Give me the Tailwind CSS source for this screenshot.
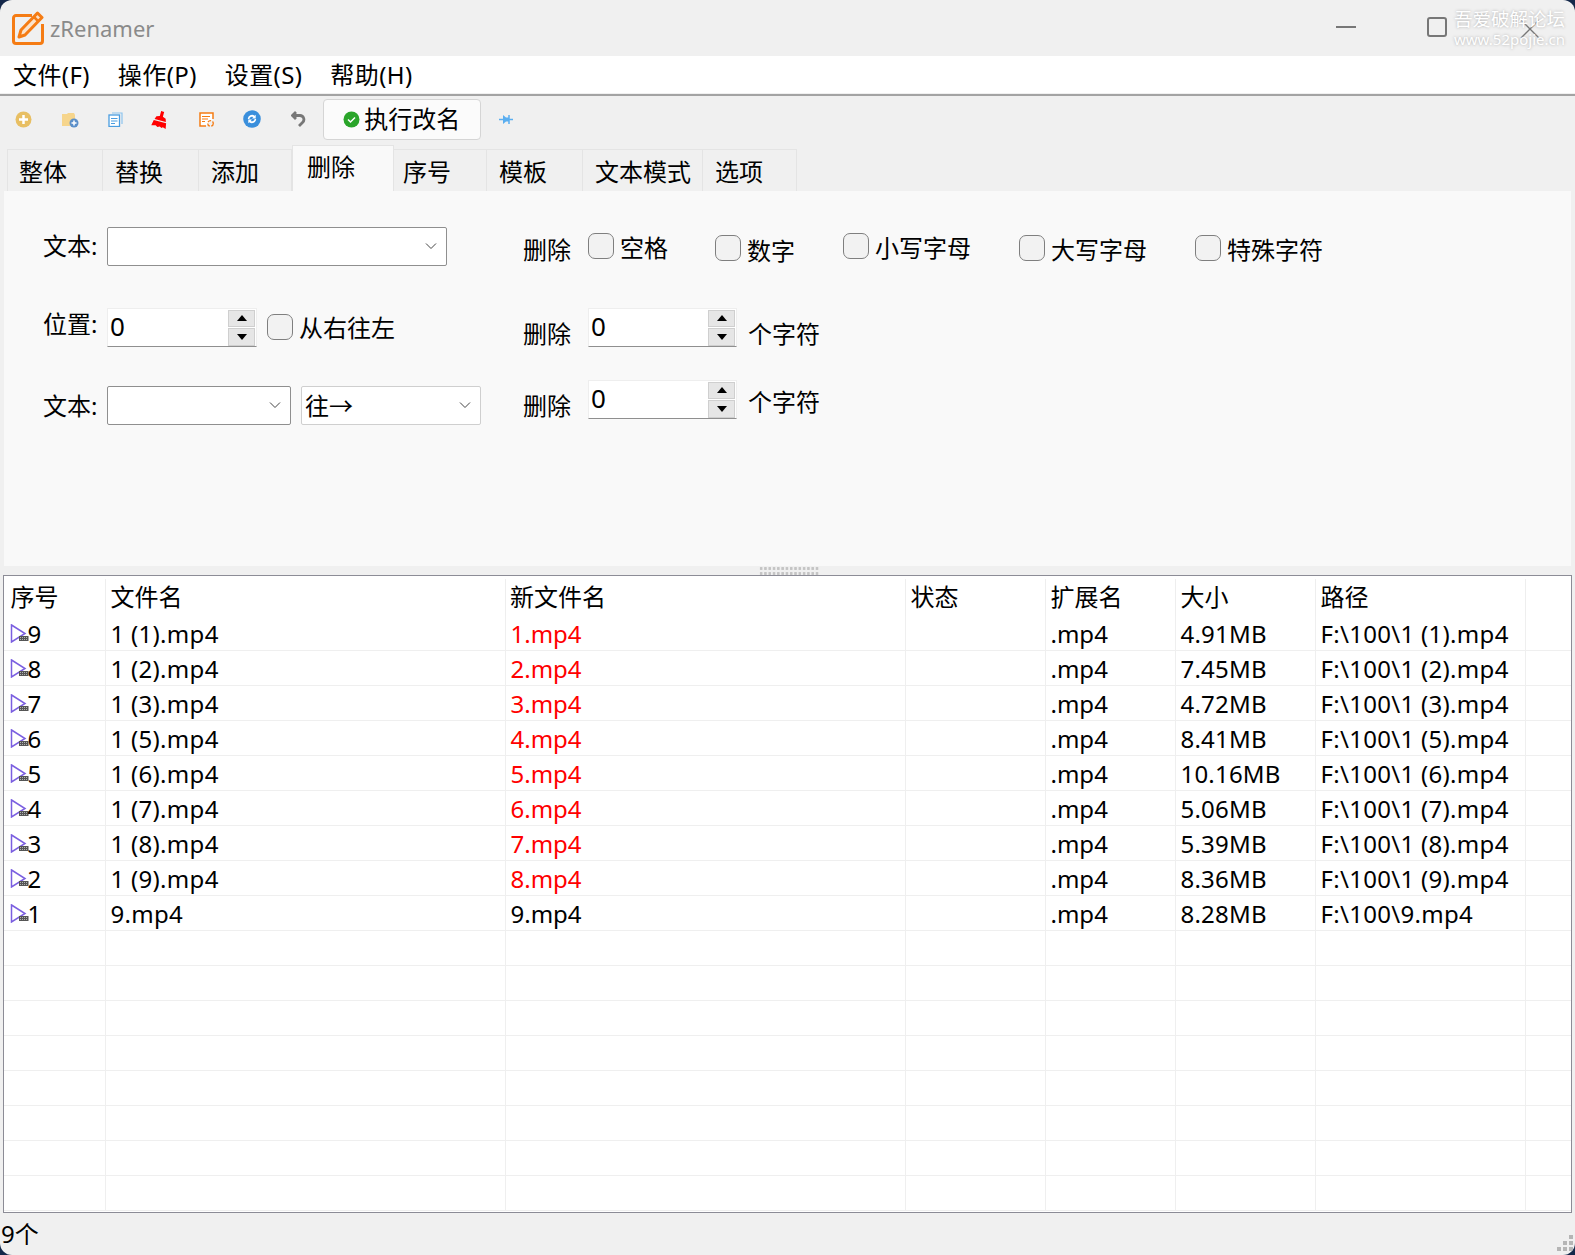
<!DOCTYPE html>
<html lang="zh-CN">

<head>
    <meta charset="UTF-8">
    <title>zRenamer</title>
    <script src="https://cdn.jsdelivr.net/npm/@tailwindcss/browser@4"></script>
</head>

<body class="bg-[#14284a] font-['Noto_Sans','Noto_Sans_CJK_SC',sans-serif] text-[24px] text-black">

    <svg class="hidden">
        <symbol id="chev" viewBox="0 0 12 8"><path d="M1 1.5 6 6.5 11 1.5" fill="none" stroke="#444" stroke-width="1"/></symbol>
        <symbol id="up" viewBox="0 0 10 6"><path d="M5 0 10 6H0Z" fill="#000"/></symbol>
        <symbol id="down" viewBox="0 0 10 6"><path d="M0 0H10L5 6Z" fill="#000"/></symbol>
        <symbol id="file" viewBox="0 0 19 19">
            <path d="M1.500 1 15 9.500 1.500 18Z" fill="#fff" stroke="#7b5fe0" stroke-width="1.500"/>
            <rect x="9" y="12" width="9.500" height="5" fill="#555"/>
            <path d="M10 13.500h8M10 15.500h8" stroke="#ddd" stroke-width="0.7" stroke-dasharray="1 1"/>
        </symbol>
    </svg>

    <div class="h-screen w-full rounded-[12px] overflow-hidden bg-[#f0f0f0] flex flex-col relative">

        <!-- title bar -->
        <div class="h-[56px] flex items-center relative">
            <svg class="ml-[12px] w-[32px] h-[34px]" viewBox="0 0 32 34">
                <path d="M20 4.500H4a2.500 2.500 0 0 0-2.500 2.500V30a2.500 2.500 0 0 0 2.500 2.500H28a2.500 2.500 0 0 0 2.500-2.500V13" fill="none" stroke="#f57c14" stroke-width="3"/>
                <path d="M25.500 2 30 6.500 13 24 7 26 9 19Z" fill="#fbe3cc" stroke="#f57c14" stroke-width="3" stroke-linejoin="round"/>
                <path d="M22 6 26.500 10.500" stroke="#f57c14" stroke-width="2.500"/>
            </svg>
            <span class="ml-[6px] text-[22px] text-[#8a8a8a]">zRenamer</span>
            <div class="absolute left-[1336px] top-[26px] w-[20px] h-[1.5px] bg-[#777]"></div>
            <div class="absolute left-[1427px] top-[17px] w-[20px] h-[20px] border-2 border-[#777] rounded-[3px]"></div>
            <svg class="absolute left-[1520px] top-[19px] w-[20px] h-[20px]" viewBox="0 0 20 20"><path d="M1 1 19 19M19 1 1 19" stroke="#777" stroke-width="1.300"/></svg>
            <div class="absolute left-[1454px] top-[7px] flex flex-col items-center text-white [text-shadow:0_0_3px_#aaa] leading-none">
                <span class="text-[18.500px] leading-[24px]">吾爱破解论坛</span>
                <span class="text-[15px] leading-[17px]">www.52pojie.cn</span>
            </div>
        </div>

        <!-- menu -->
        <div class="h-[37px] bg-white flex items-center pl-[13px] gap-[28px] tracking-[0.4px]">
            <span>文件(F)</span>
            <span>操作(P)</span>
            <span>设置(S)</span>
            <span>帮助(H)</span>
        </div>
        <div class="h-[3px] border-b-2 border-[#a3a3a3]"></div>

        <!-- toolbar -->
        <div class="h-[49px] flex items-center pl-[1px] pb-[3px]">
            <div class="w-[45.700px] flex justify-center">
                <svg class="w-[17px] h-[17px]" viewBox="0 0 17 17"><circle cx="8.500" cy="8.500" r="8" fill="#e8bf63"/><path d="M8.500 4v9M4 8.500h9" stroke="#fff" stroke-width="2.500"/></svg>
            </div>
            <div class="w-[45.700px] flex justify-center">
                <svg class="w-[18px] h-[17px]" viewBox="0 0 18 17"><path d="M1 3h5l1-1h6l1 2v11H1Z" fill="#f6d58c"/><circle cx="13" cy="12" r="4.500" fill="#5b8fc9"/><path d="M13 9.500v5M10.500 12h5" stroke="#fff" stroke-width="1.500"/></svg>
            </div>
            <div class="w-[45.700px] flex justify-center">
                <svg class="w-[15px] h-[15px]" viewBox="0 0 15 15"><path d="M4 1h10v11" fill="none" stroke="#8cc4ee" stroke-width="1.200"/><rect x="1" y="3" width="10.500" height="11.500" fill="#fff" stroke="#4a9de0" stroke-width="1.300"/><path d="M3 6.500h6.500M3 9h6.500M3 11.500h4" stroke="#4a9de0" stroke-width="1.100"/></svg>
            </div>
            <div class="w-[45.700px] flex justify-center">
                <svg class="w-[17px] h-[17px] rotate-[15deg]" viewBox="0 0 16 16"><path d="M6.500 0h3l0 5 3 1 1 3H2.500l1-3 3-1Z" fill="#f00"/><path d="M2 10h12l1 5.500-3-1-1 1-2-1-2 1-2-1-4 1Z" fill="#f00"/></svg>
            </div>
            <div class="w-[45.700px] flex justify-center">
                <svg class="w-[15px] h-[15px]" viewBox="0 0 15 15"><path d="M14 7V1H1v13h6" fill="#fff" stroke="#f57c14" stroke-width="1.500"/><path d="M3 4.500h8M3 7h6M3 9.500h3" stroke="#f57c14" stroke-width="1.200"/><circle cx="11.500" cy="11.500" r="2.800" fill="none" stroke="#f57c14" stroke-width="1.300" stroke-dasharray="3.500 1.500"/></svg>
            </div>
            <div class="w-[45.700px] flex justify-center">
                <svg class="w-[18px] h-[18px]" viewBox="0 0 17 17"><circle cx="8.500" cy="8.500" r="8.300" fill="#3a8fdc"/><path d="M4.500 8.500a4 4 0 0 1 6.500-3l1-1v3.500H8.500l1.300-1.300A2.500 2.500 0 0 0 6 8.500ZM12.500 8.500a4 4 0 0 1-6.500 3l-1 1V9h3.500l-1.300 1.300A2.500 2.500 0 0 0 11 8.500Z" fill="#fff"/></svg>
            </div>
            <div class="w-[45.700px] flex justify-center pl-[2px]">
                <svg class="w-[15px] h-[16px]" viewBox="0 0 15 16"><path d="M5 1 1.500 4.500 5 8M2 4.500H9a4 4 0 0 1 2.500 7L8 15" fill="none" stroke="#777" stroke-width="2.800"/></svg>
            </div>
            <div class="ml-[2px] w-[158px] h-[41px] bg-white/70 border border-[#d5d5d5] rounded-[4px] flex items-center justify-center gap-[4px]">
                <svg class="w-[17px] h-[17px]" viewBox="0 0 17 17"><circle cx="8.500" cy="8.500" r="8" fill="#2aa52a"/><path d="M5 8.500 7.500 11 12 6.500" fill="none" stroke="#fff" stroke-width="1.500"/></svg>
                <span>执行改名</span>
            </div>
            <svg class="ml-[18px] w-[14px] h-[11px]" viewBox="0 0 14 11"><path d="M0 5.500h4M10 5.500h4" stroke="#5aaef0" stroke-width="1.500"/><path d="M4 1v9l3-2.500h3v-4H7Z" fill="#5aaef0"/><path d="M10 1v9" stroke="#5aaef0" stroke-width="1.500"/></svg>
        </div>

        <!-- tabs -->
        <div class="h-[46px] flex items-end pl-[7px]">
            <div class="w-[96px] h-[42px] border border-b-0 border-[#e4e4e4] pl-[11px] flex items-center pt-[3px]">整体</div>
            <div class="w-[96px] h-[42px] border border-l-0 border-b-0 border-[#e4e4e4] pl-[12px] flex items-center pt-[3px]">替换</div>
            <div class="w-[93px] h-[42px] border border-l-0 border-b-0 border-[#e4e4e4] pl-[12px] flex items-center pt-[3px]">添加</div>
            <div class="w-[102px] h-[46px] bg-[#f9f9f9] border border-b-0 border-[#e4e4e4] pl-[14px] pb-[4px] flex items-center">删除</div>
            <div class="w-[93px] h-[42px] border border-l-0 border-b-0 border-[#e4e4e4] pl-[9px] flex items-center pt-[3px]">序号</div>
            <div class="w-[96px] h-[42px] border border-l-0 border-b-0 border-[#e4e4e4] pl-[12px] flex items-center pt-[3px]">模板</div>
            <div class="w-[120px] h-[42px] border border-l-0 border-b-0 border-[#e4e4e4] pl-[12px] flex items-center pt-[3px]">文本模式</div>
            <div class="w-[94px] h-[42px] border border-l-0 border-b-0 border-[#e4e4e4] pl-[12px] flex items-center pt-[3px]">选项</div>
        </div>

        <!-- delete options panel -->
        <div class="mx-[4px] h-[375px] bg-[#f9f9f9] flex pt-[36px] pl-[39px]">
            <div class="w-[480px] flex flex-col">
                <div class="h-[38px] flex items-center">
                    <span class="w-[64px]">文本:</span>
                    <div class="w-[340px] h-[39px] bg-white border border-[#8f8f8f] rounded-[2px] flex items-center justify-end pr-[9px]">
                        <svg class="w-[12px] h-[8px]"><use href="#chev"/></svg>
                    </div>
                </div>
                <div class="h-[38px] mt-[43px] flex items-center">
                    <span class="w-[64px] -mt-[6px]">位置:</span>
                    <div class="w-[150px] h-[39px] bg-white border border-[#eeeeee] border-b-[#8f8f8f] flex items-center pl-[2px] relative">
                        <span class="text-[26px] -mt-[2px]">0</span>
                        <div class="absolute right-[1px] top-[1px] w-[27px] flex flex-col gap-[1px]">
                            <div class="h-[17px] bg-[#e6e6e6] border border-[#cfcfcf] flex items-center justify-center"><svg class="w-[10px] h-[6px]"><use href="#up"/></svg></div>
                            <div class="h-[18px] bg-[#e6e6e6] border border-[#cfcfcf] flex items-center justify-center"><svg class="w-[10px] h-[6px]"><use href="#down"/></svg></div>
                        </div>
                    </div>
                    <div class="ml-[10px] w-[26px] h-[26px] bg-[#f2f2f2] border border-[#7f7f7f] rounded-[7px]"></div>
                    <span class="ml-[6px] pt-[2px]">从右往左</span>
                </div>
                <div class="h-[38px] mt-[40px] flex items-center">
                    <span class="w-[64px] pt-[2px]">文本:</span>
                    <div class="w-[184px] h-[39px] bg-white border border-[#8f8f8f] rounded-[2px] flex items-center justify-end pr-[9px]">
                        <svg class="w-[12px] h-[8px]"><use href="#chev"/></svg>
                    </div>
                    <div class="ml-[10px] w-[180px] h-[39px] bg-white border border-[#cfcfcf] rounded-[2px] flex items-center justify-between pl-[3px] pr-[9px]">
                        <span class="pt-[2px]">往→</span>
                        <svg class="w-[12px] h-[8px]"><use href="#chev"/></svg>
                    </div>
                </div>
            </div>

            <div class="flex flex-col">
                <div class="h-[38px] flex items-center">
                    <span class="w-[65px] pt-[7px]">删除</span>
                    <div class="w-[26px] h-[26px] bg-[#f2f2f2] border border-[#7f7f7f] rounded-[7px]"></div>
                    <span class="ml-[6px] pt-[4px]">空格</span>
                    <div class="ml-[47px] w-[26px] h-[26px] bg-[#f2f2f2] border border-[#7f7f7f] rounded-[7px] mt-[4px]"></div>
                    <span class="ml-[6px] pt-[9px]">数字</span>
                    <div class="ml-[48px] w-[26px] h-[26px] bg-[#f2f2f2] border border-[#7f7f7f] rounded-[7px]"></div>
                    <span class="ml-[6px] pt-[4px]">小写字母</span>
                    <div class="ml-[48px] w-[26px] h-[26px] bg-[#f2f2f2] border border-[#7f7f7f] rounded-[7px] mt-[4px]"></div>
                    <span class="ml-[6px] pt-[7px]">大写字母</span>
                    <div class="ml-[48px] w-[26px] h-[26px] bg-[#f2f2f2] border border-[#7f7f7f] rounded-[7px] mt-[4px]"></div>
                    <span class="ml-[6px] pt-[7px]">特殊字符</span>
                </div>
                <div class="h-[38px] mt-[43px] flex items-center">
                    <span class="w-[65px] pt-[13px]">删除</span>
                    <div class="w-[149px] h-[39px] bg-white border border-[#eeeeee] border-b-[#8f8f8f] flex items-center pl-[2px] relative">
                        <span class="text-[26px] -mt-[1px]">0</span>
                        <div class="absolute right-[1px] top-[1px] w-[27px] flex flex-col gap-[1px]">
                            <div class="h-[17px] bg-[#e6e6e6] border border-[#cfcfcf] flex items-center justify-center"><svg class="w-[10px] h-[6px]"><use href="#up"/></svg></div>
                            <div class="h-[18px] bg-[#e6e6e6] border border-[#cfcfcf] flex items-center justify-center"><svg class="w-[10px] h-[6px]"><use href="#down"/></svg></div>
                        </div>
                    </div>
                    <span class="ml-[11px] pt-[13px]">个字符</span>
                </div>
                <div class="h-[38px] mt-[34px] flex items-center">
                    <span class="w-[65px] pt-[13px]">删除</span>
                    <div class="w-[149px] h-[39px] bg-white border border-[#eeeeee] border-b-[#8f8f8f] flex items-center pl-[2px] relative">
                        <span class="text-[26px] -mt-[1px]">0</span>
                        <div class="absolute right-[1px] top-[1px] w-[27px] flex flex-col gap-[1px]">
                            <div class="h-[17px] bg-[#e6e6e6] border border-[#cfcfcf] flex items-center justify-center"><svg class="w-[10px] h-[6px]"><use href="#up"/></svg></div>
                            <div class="h-[18px] bg-[#e6e6e6] border border-[#cfcfcf] flex items-center justify-center"><svg class="w-[10px] h-[6px]"><use href="#down"/></svg></div>
                        </div>
                    </div>
                    <span class="ml-[11px] pt-[6px]">个字符</span>
                </div>
            </div>
        </div>

        <!-- splitter -->
        <div class="h-[9px] flex items-end justify-center pl-[2px]">
            <div class="w-[60px] h-[9px] bg-[radial-gradient(#c4c4c4_1.200px,transparent_1.400px)] bg-[length:4.300px_5px]"></div>
        </div>

        <!-- file list -->
        <div class="mx-[3px] h-[638px] bg-white border-[1.500px] border-[#8c8c96] flex flex-col">
            <div class="h-[39.500px] pt-[3px] grid grid-cols-[102px_400px_400px_140px_130px_140px_210px_1fr]">
                <div class="border-r border-[#eeeeee] pl-[6.500px] flex items-center">序号</div>
                <div class="border-r border-[#eeeeee] pl-[4.500px] flex items-center">文件名</div>
                <div class="border-r border-[#eeeeee] pl-[4px] flex items-center">新文件名</div>
                <div class="border-r border-[#eeeeee] pl-[4.500px] flex items-center">状态</div>
                <div class="border-r border-[#eeeeee] pl-[4.500px] flex items-center">扩展名</div>
                <div class="border-r border-[#eeeeee] pl-[4.500px] flex items-center">大小</div>
                <div class="border-r border-[#eeeeee] pl-[4.500px] flex items-center">路径</div>
                <div></div>
            </div>
            <div id="rows"></div>
        </div>

        <!-- status bar -->
        <div class="flex-1 flex items-center relative">
            <span class="pl-[1px]">9个</span>
            <div class="absolute right-[2px] bottom-[4px] grid grid-cols-3 gap-[2px]">
                <div></div><div></div><div class="w-[4px] h-[4px] bg-[#b5b5b5]"></div>
                <div></div><div class="w-[4px] h-[4px] bg-[#b5b5b5]"></div><div class="w-[4px] h-[4px] bg-[#b5b5b5]"></div>
                <div class="w-[4px] h-[4px] bg-[#b5b5b5]"></div><div class="w-[4px] h-[4px] bg-[#b5b5b5]"></div><div class="w-[4px] h-[4px] bg-[#b5b5b5]"></div>
            </div>
        </div>
    </div>

    <script>
        const files = [
            ["9", "1 (1).mp4", "1.mp4", "4.91MB", "F:\\100\\1 (1).mp4"],
            ["8", "1 (2).mp4", "2.mp4", "7.45MB", "F:\\100\\1 (2).mp4"],
            ["7", "1 (3).mp4", "3.mp4", "4.72MB", "F:\\100\\1 (3).mp4"],
            ["6", "1 (5).mp4", "4.mp4", "8.41MB", "F:\\100\\1 (5).mp4"],
            ["5", "1 (6).mp4", "5.mp4", "10.16MB", "F:\\100\\1 (6).mp4"],
            ["4", "1 (7).mp4", "6.mp4", "5.06MB", "F:\\100\\1 (7).mp4"],
            ["3", "1 (8).mp4", "7.mp4", "5.39MB", "F:\\100\\1 (8).mp4"],
            ["2", "1 (9).mp4", "8.mp4", "8.36MB", "F:\\100\\1 (9).mp4"],
            ["1", "9.mp4", "9.mp4", "8.28MB", "F:\\100\\9.mp4"]
        ];
        const rowClass = "h-[35px] grid grid-cols-[102px_400px_400px_140px_130px_140px_210px_1fr] border-b border-[#efefef]";
        const cell = "border-r border-[#efefef] pl-[4.500px] flex items-center whitespace-nowrap";
        let html = "";
        for (let i = 0; i < 17; i++) {
            let f = files[i];
            if (f) {
                // only names that actually change are shown in red
                let color = f[1] === f[2] ? "" : "text-[#ff0000]";
                html += `<div class="${rowClass}">
                    <div class="${cell}"><svg class="w-[19px] h-[19px] ml-[1px] -mr-[1px]"><use href="#file"/></svg><span>${f[0]}</span></div>
                    <div class="${cell} tracking-[0.3px]">${f[1]}</div>
                    <div class="${cell} ${color}">${f[2]}</div>
                    <div class="${cell}"></div>
                    <div class="${cell}">.mp4</div>
                    <div class="${cell} tracking-[0.2px]">${f[3]}</div>
                    <div class="${cell} tracking-[0.3px]">${f[4]}</div>
                    <div></div>
                </div>`;
            } else {
                html += `<div class="${rowClass}">` + `<div class="${cell}"></div>`.repeat(7) + `<div></div></div>`;
            }
        }
        document.getElementById("rows").innerHTML = html;
    </script>

</body>

</html>
